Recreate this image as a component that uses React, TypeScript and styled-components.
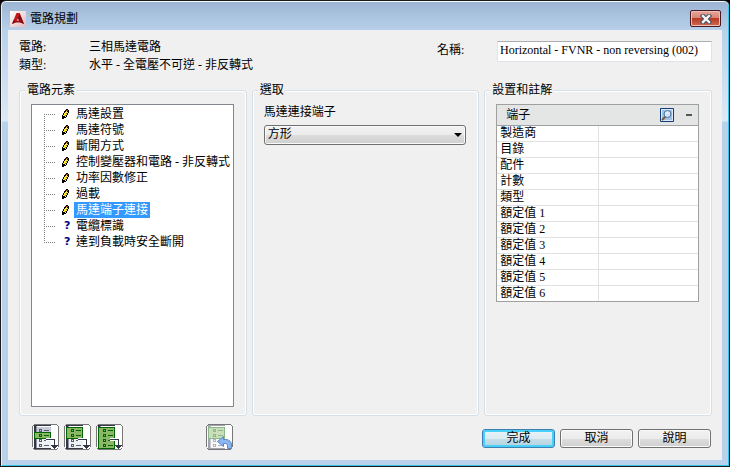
import React, { useState } from "react";
import styled, { createGlobalStyle, css } from "styled-components";

const GlobalStyle = createGlobalStyle`
  *, *::before, *::after { box-sizing: border-box; }
  body {
    margin: 0;
    background: #000;
    color: #000;
    font-family: "Liberation Serif", "Noto Sans CJK TC", serif;
    font-size: 12px;
    line-height: 16px;
  }
  button, input, select { font: inherit; color: inherit; }
`;

const Dialog = styled.main`
  display: flex;
  flex-direction: column;
  min-height: 100vh;
  padding: 0 6px 6px;
  border: 1px solid #1a1a1a;
  border-radius: 6px 6px 0 0;
  background: linear-gradient(#9ab4d2, #b9d1ea 30px, #dce9f7 120px, #b9d1ea 121px);
  box-shadow: inset 0 1px 0 #f2f8fd, inset 1px 0 0 #e6f3fc, inset -1px -1px 0 #35c5e8;
`;

const TitleBar = styled.header`
  display: flex;
  align-items: center;
  height: 29px;
  padding: 6px 2px 0 3px;
`;

const Title = styled.h1`
  flex: 1;
  margin: 0 0 0 4px;
  font-size: 12px;
  font-weight: 400;
`;

const CloseButton = styled.button`
  display: grid;
  place-items: center;
  width: 31px;
  height: 17px;
  padding: 0;
  border: 1px solid #451a22;
  border-radius: 2px;
  background: linear-gradient(#e8a598, #d98576 45%, #b93a22 50%, #cf6a50);
  box-shadow: inset 0 0 0 1px #ecc0b6;
`;

const Client = styled.div`
  display: flex;
  flex: 1;
  flex-direction: column;
  margin: 0 1px;
  padding: 9px 10px 10px 11px;
  background: #f0f0f0;
`;

const Summary = styled.section`
  display: flex;
  justify-content: space-between;
  margin-bottom: 9px;
`;

const Facts = styled.dl`
  display: grid;
  grid-template-columns: 70px auto;
  row-gap: 2px;
  margin: 0;
  dd { margin: 0; }
`;

const NameField = styled.div`
  display: flex;
  flex: 0 1 275px;
  align-items: flex-start;
  margin-top: 2px;
`;

const NameLabel = styled.label`
  flex: 0 0 60px;
  margin-top: 1px;
`;

const NameInput = styled.input`
  flex: 1;
  min-width: 0;
  height: 21px;
  padding: 0 2px 2px;
  border: 1px solid #e2e3ea;
  border-top-color: #abadb3;
  background: #fff;
`;

const Panels = styled.div`
  display: grid;
  flex: 1;
  grid-template-columns: repeat(3, minmax(0, 1fr));
  gap: 5px;
`;

const Group = styled.fieldset`
  display: flex;
  flex-direction: column;
  min-width: 0;
  margin: 0;
  padding: 6px 12px 8px 11px;
  border: 1px solid #d5dfe8;
  border-radius: 3px;
  box-shadow: inset 0 0 0 1px #fff;
`;

const GroupTitle = styled.legend`
  margin-left: -6px;
  padding: 0 2px;
  background: #f0f0f0;
`;

const Tree = styled.ul`
  flex: 1;
  margin: 0;
  padding: 1px 0;
  border: 1px solid #828790;
  background: #fff;
  list-style: none;
`;

const dots = (direction: string) =>
  `repeating-linear-gradient(${direction}, #808080 0 1px, transparent 1px 2px)`;

const TreeRow = styled.li`
  display: flex;
  align-items: center;
  height: 16px;
  padding-left: 12px;
  white-space: nowrap;

  &::before {
    content: "";
    width: 11px;
    height: 16px;
    margin-right: 6px;
    background:
      ${dots("to right")} 0 8px / 11px 1px no-repeat,
      ${dots("to bottom")} 0 0 / 1px 16px no-repeat;
  }
  &:first-child::before {
    background:
      ${dots("to right")} 0 8px / 11px 1px no-repeat,
      ${dots("to bottom")} 0 8px / 1px 8px no-repeat;
  }
  &:last-child::before {
    background:
      ${dots("to right")} 0 8px / 11px 1px no-repeat,
      ${dots("to bottom")} 0 0 / 1px 8px no-repeat;
  }
`;

const Marker = styled.span`
  display: flex;
  flex: 0 0 13px;
  align-items: center;
  padding-left: 1px;
`;

const Question = styled.span`
  padding-left: 2px;
  color: #000080;
  font: bold 11px/16px "DejaVu Sans", sans-serif;
`;

const TreeLabel = styled.button<{ $selected: boolean }>`
  height: 16px;
  padding: 0 2px;
  border: 0;
  background: none;
  line-height: 16px;
  ${({ $selected }) => $selected && css`
    background: #3399ff;
    color: #fff;
  `}
`;

const FieldLabel = styled.label`
  margin-bottom: 5px;
`;

const SelectBox = styled.div`
  display: grid;
  align-items: center;
  > * { grid-area: 1 / 1; }
  svg { justify-self: end; margin-right: 4px; pointer-events: none; }
`;

const Select = styled.select`
  width: 100%;
  height: 20px;
  padding: 0 18px 2px 3px;
  appearance: none;
  border: 1px solid #707070;
  border-radius: 3px;
  background: linear-gradient(#f2f2f2, #ebebeb 50%, #dddddd 51%, #cfcfcf);
  box-shadow: inset 0 0 0 1px #fafafa;
`;

const Properties = styled.section`
  border: 1px solid #a0a0a0;
  background: #fff;
`;

const PropertiesHeader = styled.header`
  display: flex;
  align-items: center;
  height: 21px;
  padding: 0 6px 0 9px;
  border-bottom: 1px solid #a0a0a0;
  background: #e4e6e6;
`;

const PropertiesTitle = styled.h2`
  flex: 1;
  margin: 0;
  font-size: 12px;
  font-weight: 400;
`;

const PlainButton = styled.button`
  display: grid;
  place-items: center;
  padding: 0;
  border: 0;
  background: none;
`;

const HeaderTools = styled.div`
  display: flex;
  align-items: center;
  gap: 12px;
`;

const PropertyTable = styled.table`
  width: 100%;
  table-layout: fixed;
  border-spacing: 0;

  th, td {
    height: 16px;
    padding: 0 3px;
    border-bottom: 1px solid #e2e2e2;
    font-weight: 400;
    line-height: 15px;
    text-align: left;
  }
  th { width: 102px; border-right: 1px solid #e2e2e2; }
  tr:last-child > * { height: 15px; border-bottom: 0; }
`;

const Footer = styled.footer`
  display: flex;
  align-items: flex-start;
  justify-content: space-between;
  margin-top: 8px;
`;

const Tools = styled.div`
  display: flex;
  gap: 5px;
  padding-left: 13px;
`;

const UndoSlot = styled.div`
  margin-left: 78px;
`;

const Actions = styled.div`
  display: flex;
  gap: 5px;
  margin: 5px 1px 0 0;
`;

const ActionButton = styled.button<{ $primary?: boolean }>`
  width: 73px;
  height: 19px;
  padding: 0 0 2px;
  border: 1px solid ${({ $primary }) => ($primary ? "#3c7fb1" : "#707070")};
  border-radius: 3px;
  background: ${({ $primary }) =>
    $primary
      ? "linear-gradient(#e8f3f8, #dcebf2 50%, #c5dde8 51%, #b5d3e2)"
      : "linear-gradient(#f2f2f2, #ebebeb 50%, #dddddd 51%, #cfcfcf)"};
  box-shadow: inset 0 0 0 ${({ $primary }) => ($primary ? "2px #48d0f8" : "1px #fafafa")};
  line-height: 16px;
`;

function AppLogo() {
  return (
    <svg width="16" height="16" viewBox="0 0 16 16" aria-hidden="true">
      <defs>
        <linearGradient id="logoPlate" x2="1" y2="1">
          <stop offset="0" stopColor="#fff" />
          <stop offset="1" stopColor="#e3b9b9" />
        </linearGradient>
      </defs>
      <path fill="url(#logoPlate)" d="M0 0h16v16H0z" />
      <path fill="#c4161c" d="M6.500 2h3L14 13l-3.500-1.500L8 7.500l-2.500 4L2 13z" />
      <path fill="#7d0d12" d="M8 7.500 9.500 2 14 13l-3.500-1.500zM5.500 11.500 2 13l2-4.500z" />
      <path fill="#a01015" d="M5 9.500h6v2H5z" />
    </svg>
  );
}

function CloseIcon() {
  return (
    <svg width="12" height="10" viewBox="0 0 12 10" aria-hidden="true">
      <path d="M3 2l6 6M9 2L3 8" stroke="#4a5366" strokeWidth="4.500" strokeLinecap="square" />
      <path d="M3 2l6 6M9 2L3 8" stroke="#f4f4f4" strokeWidth="2.400" strokeLinecap="square" />
    </svg>
  );
}

function PencilIcon() {
  return (
    <svg width="7" height="10" viewBox="0 0 7 10" shapeRendering="crispEdges" aria-hidden="true">
      <path fill="#000" d="M4 0h2v1h1v3H6v2H5v2H4v1H2v1H0V6h1V4h1V2h1V1h1z" />
      <path fill="#ffe92e" d="M4 2h1v1h1v1H5v2H4v2H3V7H1V6h1V4h1V3h1z" />
      <path fill="#a08c20" d="M4 4h1v1H4zM3 6h1v1H3z" />
      <path fill="#a03030" d="M4 1h2v1H4z" />
    </svg>
  );
}

function ListIcon({ greenFrom, greenRows, undo }: { greenFrom: number; greenRows: number; undo?: boolean }) {
  const rows = [0, 1, 2, 3];
  const isGreen = (row: number) => row >= greenFrom && row < greenFrom + greenRows;
  const top = 3 + greenFrom * 5;
  return (
    <svg width="27" height="26" viewBox="0 0 27 26" shapeRendering="crispEdges" aria-hidden="true">
      <path fill="#fff" d="M1 1h25v24H1z" />
      <path fill="#777" d="M2 0h23v1H2zM0 2h1v21H0zM26 2h1v21h-1zM2 25h23v1H2zM1 1h1v1H1zM25 1h1v1h-1zM1 24h1v1H1zM25 24h1v1h-1z" />
      <g opacity={undo ? 0.45 : 1}>
        <path fill="#343846" d="M2 1h17v1H2zM2 2h2v22H2zM2 24h17v1H2z" />
        <path fill="#c6cbd8" d="M5 3h14v11H5z" />
        <path fill="#eef0f4" d="M5 14h14v10H5z" />
        <path fill="#8d93a2" d="M4 2h1v22H4z" />
        <path fill="#006400" d={`M2 ${top}h17v${greenRows * 5 + 2}H2z`} />
        <path fill="#8ab866" d={`M3 ${top + 1}h15v${greenRows * 5}H3z`} />
        {rows.map((row) => (
          <path
            key={row}
            fill={isGreen(row) ? "#006400" : "#565c6b"}
            d={`M7 ${5 + row * 5}h3v3H7zM8 ${6 + row * 5}v1h1v-1zM12 ${6 + row * 5}h5v1h-5z`}
            fillRule="evenodd"
          />
        ))}
      </g>
      {undo ? (
        <path
          fill="#8bb6f2"
          stroke="#5b86c8"
          shapeRendering="auto"
          d="M11.500 17.500l6-5v3h3q5 1 5 5.500v3.500h-4v-3q0-2-2-2h-2v3z"
        />
      ) : (
        <>
          <path fill="#fff" d="M14 14h5v1h-5zM14 16h5v1h-5z" />
          <path fill="#343846" d="M14 15h9v6h3v1h-1v1h-1v1h-1v1h-1v-1h-1v-1h-1v-1h-1v-1h3v-5h-8z" />
        </>
      )}
    </svg>
  );
}

function CatalogIcon() {
  return (
    <svg width="14" height="14" viewBox="0 0 14 14" aria-hidden="true">
      <path fill="#dce9f6" stroke="#123c78" d="M.5.5h13v13H.5z" />
      <path fill="#9fc2e6" d="M2 2h10v10H2z" />
      <path d="M5.500 8.500L2 12" stroke="#7b5a3c" strokeWidth="2" />
      <circle cx="7.500" cy="6" r="3.500" fill="#cfe6fa" stroke="#4a6f99" />
      <path d="M6 5.500l1.500-1.500" stroke="#fff" />
    </svg>
  );
}

const elements = [
  { label: "馬達設置", known: true },
  { label: "馬達符號", known: true },
  { label: "斷開方式", known: true },
  { label: "控制變壓器和電路 - 非反轉式", known: true },
  { label: "功率因數修正", known: true },
  { label: "過載", known: true },
  { label: "馬達端子連接", known: true },
  { label: "電纜標識", known: false },
  { label: "達到負載時安全斷開", known: false },
];

const properties = [
  "製造商", "目錄", "配件", "計數", "類型",
  "額定值 1", "額定值 2", "額定值 3", "額定值 4", "額定值 5", "額定值 6",
];

export default function App() {
  const [selected, setSelected] = useState(6);
  const [open, setOpen] = useState(true);
  return (
    <>
      <GlobalStyle />
      <Dialog>
        <TitleBar>
          <AppLogo />
          <Title>電路規劃</Title>
          <CloseButton type="button" aria-label="關閉"><CloseIcon /></CloseButton>
        </TitleBar>
        <Client>
          <Summary>
            <Facts>
              <dt>電路:</dt><dd>三相馬達電路</dd>
              <dt>類型:</dt><dd>水平 - 全電壓不可逆 - 非反轉式</dd>
            </Facts>
            <NameField>
              <NameLabel htmlFor="circuit-name">名稱:</NameLabel>
              <NameInput id="circuit-name" type="text" defaultValue="Horizontal - FVNR - non reversing (002)" />
            </NameField>
          </Summary>
          <Panels>
            <Group>
              <GroupTitle>電路元素</GroupTitle>
              <Tree>
                {elements.map(({ label, known }, index) => (
                  <TreeRow key={label}>
                    <Marker>{known ? <PencilIcon /> : <Question>?</Question>}</Marker>
                    <TreeLabel type="button" $selected={index === selected} onClick={() => setSelected(index)}>
                      {label}
                    </TreeLabel>
                  </TreeRow>
                ))}
              </Tree>
            </Group>
            <Group>
              <GroupTitle>選取</GroupTitle>
              <FieldLabel htmlFor="terminal">馬達連接端子</FieldLabel>
              <SelectBox>
                <Select id="terminal"><option>方形</option></Select>
                <svg width="8" height="4" viewBox="0 0 8 4" aria-hidden="true"><path d="M0 0h8L4 4z" /></svg>
              </SelectBox>
            </Group>
            <Group>
              <GroupTitle>設置和註解</GroupTitle>
              <Properties>
                <PropertiesHeader>
                  <PropertiesTitle>端子</PropertiesTitle>
                  <HeaderTools>
                    <PlainButton type="button" aria-label="目錄查詢"><CatalogIcon /></PlainButton>
                    <PlainButton type="button" aria-label="收合" aria-expanded={open} onClick={() => setOpen(!open)}>
                      <svg width="6" height="2" viewBox="0 0 6 2" aria-hidden="true"><path fill="#555" d="M0 0h6v2H0z" /></svg>
                    </PlainButton>
                  </HeaderTools>
                </PropertiesHeader>
                {open && (
                  <PropertyTable>
                    <tbody>
                      {properties.map((name) => (
                        <tr key={name}><th scope="row">{name}</th><td /></tr>
                      ))}
                    </tbody>
                  </PropertyTable>
                )}
              </Properties>
            </Group>
          </Panels>
          <Footer>
            <Tools>
              <PlainButton type="button" aria-label="設定此元素"><ListIcon greenFrom={1} greenRows={1} /></PlainButton>
              <PlainButton type="button" aria-label="設定至此元素"><ListIcon greenFrom={0} greenRows={2} /></PlainButton>
              <PlainButton type="button" aria-label="設定所有元素"><ListIcon greenFrom={0} greenRows={4} /></PlainButton>
              <UndoSlot>
                <PlainButton type="button" aria-label="復原" disabled><ListIcon greenFrom={0} greenRows={2} undo /></PlainButton>
              </UndoSlot>
            </Tools>
            <Actions>
              <ActionButton type="button" $primary>完成</ActionButton>
              <ActionButton type="button">取消</ActionButton>
              <ActionButton type="button">說明</ActionButton>
            </Actions>
          </Footer>
        </Client>
      </Dialog>
    </>
  );
}
